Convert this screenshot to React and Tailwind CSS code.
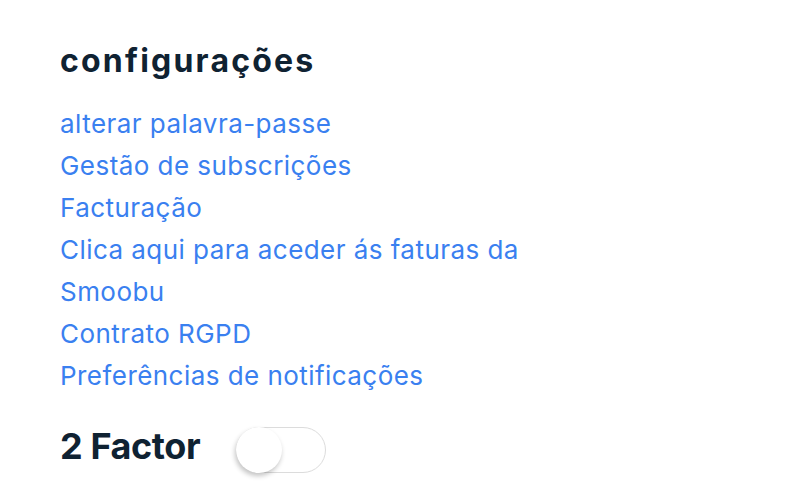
import React, { useState } from "react";

const links = [
  "alterar palavra-passe",
  "Gestão de subscrições",
  "Facturação",
  "Clica aqui para aceder ás faturas da Smoobu",
  "Contrato RGPD",
  "Preferências de notificações",
];

export default function App() {
  const [on, setOn] = useState(false);
  return (
    <div
      className="w-[794px] h-[504px] bg-white pl-[60px] pt-[38px]"
      style={{ fontFamily: "Inter, 'Noto Sans', sans-serif" }}
    >
      <h2 className="text-[32px] leading-[46px] font-bold text-[#0f2232] tracking-[2.2px]">
        configurações
      </h2>
      <div className="mt-[19px] flex flex-col w-[470px]">
        {links.map((l) => (
          <a
            key={l}
            href="#"
            className="text-[26px] leading-[42px] text-[#3a80f0] tracking-[0.45px]"
          >
            {l}
          </a>
        ))}
      </div>
      <div className="mt-[26px] flex items-start">
        <span className="w-[176px] text-[36px] leading-[46px] font-bold text-[#0f2232] tracking-[-0.4px]">
          2 Factor
        </span>
        <button
          onClick={() => setOn(!on)}
          className="relative mt-[4px] w-[90px] h-[46px] rounded-full border border-[#dcdcdc] bg-white"
        >
          <span
            className={
              "absolute top-[-1px] w-[46px] h-[46px] rounded-full bg-white shadow-[-1px_3px_5px_rgba(0,0,0,0.24)] " +
              (on ? "left-[43px]" : "left-[-1px]")
            }
          />
        </button>
      </div>
    </div>
  );
}
